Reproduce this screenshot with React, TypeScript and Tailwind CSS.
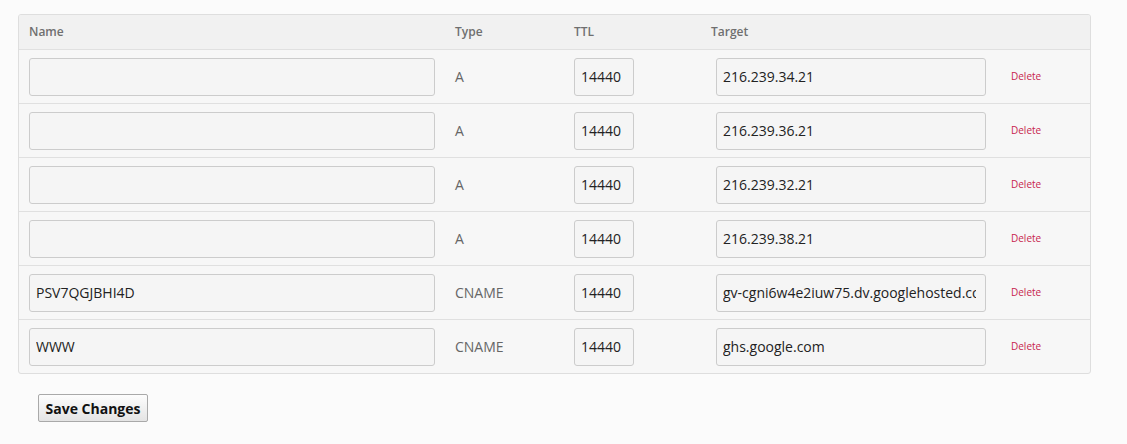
import React from "react";

const rows = [
  { name: "", type: "A", ttl: "14440", target: "216.239.34.21" },
  { name: "", type: "A", ttl: "14440", target: "216.239.36.21" },
  { name: "", type: "A", ttl: "14440", target: "216.239.32.21" },
  { name: "", type: "A", ttl: "14440", target: "216.239.38.21" },
  { name: "PSV7QGJBHI4D", type: "CNAME", ttl: "14440", target: "gv-cgni6w4e2iuw75.dv.googlehosted.com" },
  { name: "WWW", type: "CNAME", ttl: "14440", target: "ghs.google.com" },
];

const inputCls =
  "h-[38px] rounded-[3px] border border-[#cccccc] bg-[#f5f5f5] pl-[6px] pr-[9px] text-[14px] text-[#222] outline-none";

export default function App() {
  return (
    <div
      className="min-h-[444px] w-full bg-[#fbfbfb] pl-[18px] pt-[14px]"
      style={{ fontFamily: '"Open Sans", "Liberation Sans", sans-serif' }}
    >
      <div className="w-[1073px] overflow-hidden rounded-[3px] border border-[#dedede] bg-[#f7f7f7]">
        <div className="grid h-[35px] grid-cols-[426px_119px_137px_300px_1fr] items-center border-b border-[#e0e0e0] bg-[#f1f1f1] text-[12px] font-semibold text-[#6f6f6f]">
          <div className="pl-[10px]">Name</div>
          <div className="pl-[10px]">Type</div>
          <div className="pl-[10px]">TTL</div>
          <div className="pl-[10px]">Target</div>
          <div />
        </div>
        {rows.map((r, i) => (
          <div
            key={i}
            className={
              "grid grid-cols-[426px_119px_137px_300px_1fr] items-center " +
              (i < rows.length - 1 ? "h-[54px] border-b border-[#e0e0e0]" : "h-[53px]")
            }
          >
            <div className="pl-[10px]">
              <input readOnly defaultValue={r.name} className={inputCls + " w-[406px]"} />
            </div>
            <div className="pl-[10px] text-[14px] text-[#666]">{r.type}</div>
            <div className="pl-[10px]">
              <input readOnly defaultValue={r.ttl} className={inputCls + " w-[60px]"} />
            </div>
            <div className="pl-[15px]">
              <input readOnly defaultValue={r.target} className={inputCls + " w-[270px]"} />
            </div>
            <div className="pl-[10px] text-[10px] text-[#c7254e]">Delete</div>
          </div>
        ))}
      </div>
      <button className="ml-[20px] mt-[20px] h-[28px] w-[110px] rounded-[2px] border border-[#a9a9a9] bg-gradient-to-b from-[#fdfdfd] to-[#e4e4e4] text-[14px] font-bold text-[#111]">
        Save Changes
      </button>
    </div>
  );
}
